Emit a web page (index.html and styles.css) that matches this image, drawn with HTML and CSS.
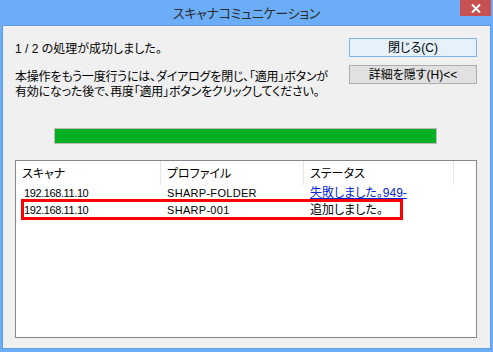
FILE: index.html
```html
<!DOCTYPE html>
<html lang="ja">
<head>
    <meta charset="UTF-8">
    <meta name="viewport" content="width=device-width, initial-scale=1.0">
    <title>スキャナコミュニケーション</title>
    <link rel="stylesheet" href="styles.css">
</head>
<body>

<div id="window">
    <div id="title-bar">
        <span id="title-text">スキャナコミュニケーション</span>
        <button id="close-x">
            <svg width="10" height="9" viewBox="0 0 10 9">
                <path d="M1 0.5 L9 8.5 M9 0.5 L1 8.5" stroke="#fff" stroke-width="2"/>
            </svg>
        </button>
    </div>

    <div id="client">
        <div id="top-area">
            <div id="message-area">
                <p class="msg-first">1 / 2 の処理が成功しました。</p>
                <p class="msg-second">本操作をもう一度行うには、ダイアログを閉じ、「適用」ボタンが<br>有効になった後で、再度「適用」ボタンをクリックしてください。</p>
            </div>
            <div id="button-area">
                <button class="dlg-button default-button">閉じる(C)</button>
                <button class="dlg-button">詳細を隠す(H)&lt;&lt;</button>
            </div>
        </div>

        <div id="progress">
            <div class="progress-fill"></div>
        </div>

        <div id="result-list">
            <div class="list-row list-header">
                <div class="cell col-scanner">スキャナ</div>
                <div class="cell col-profile">プロファイル</div>
                <div class="cell col-status">ステータス</div>
                <div class="cell col-rest"></div>
            </div>
            <div class="list-row">
                <div class="cell col-scanner latin">192.168.11.10</div>
                <div class="cell col-profile latin wide">SHARP-FOLDER</div>
                <div class="cell col-status"><a href="#" class="status-link">失敗しました。949-</a></div>
            </div>
            <div class="list-row">
                <div class="cell col-scanner latin">192.168.11.10</div>
                <div class="cell col-profile latin wide">SHARP-001</div>
                <div class="cell col-status">追加しました。</div>
            </div>
            <div id="highlight-box"></div>
        </div>
    </div>
</div>

</body>
</html>
```

FILE: styles.css
```css
body {
    margin: 0;
    padding: 0;
    background-color: #6badf6;
    font-family: 'Liberation Sans', 'Noto Sans CJK JP', sans-serif;
    font-size: 12px;
    font-feature-settings: "palt";
    color: #000;
}

#window {
    width: 493px;
    height: 352px;
    display: flex;
    flex-direction: column;
}

#title-bar {
    height: 26px;
    position: relative;
    display: flex;
    justify-content: center;
    align-items: center;
}

#title-text {
    font-family: 'Noto Sans CJK JP', sans-serif;
    font-size: 13px;
    color: #2b2b2b;
    margin-top: -2px;
    letter-spacing: -0.3px;
}

#close-x {
    position: absolute;
    top: 0;
    right: 2px;
    width: 31px;
    height: 16px;
    border: none;
    padding: 0;
    background-color: #c75050;
    display: flex;
    justify-content: center;
    align-items: center;
}

#client {
    flex: 1;
    margin: 0 3px 4px 3px;
    background-color: #f0f0f0;
    box-shadow: 0 0 0 1px #5f9ee6;
    display: flex;
    flex-direction: column;
}

#top-area {
    display: flex;
    justify-content: space-between;
    padding: 12px 13px 0 12px;
}

#message-area p {
    margin: 0;
}

.msg-first {
    padding-top: 4px;
    line-height: 14px;
}

.msg-second {
    margin-top: 14px !important;
    line-height: 15px;
    letter-spacing: -0.2px;
}

#button-area {
    display: flex;
    flex-direction: column;
    gap: 8px;
}

.dlg-button {
    width: 128px;
    height: 19px;
    padding: 0;
    font-family: inherit;
    font-size: 12px;
    font-feature-settings: "palt";
    border: 1px solid #adadad;
    background-color: #e1e1e1;
    color: #000;
    line-height: 16px;
}

.default-button {
    border-color: #7eb4ea;
    background-color: #e5f1fb;
}

#progress {
    margin: 28px 53px 0 51px;
    height: 14px;
    border: 1px solid #bcbcbc;
    background-color: #e6e6e6;
}

.progress-fill {
    width: 100%;
    height: 100%;
    background-color: #06b025;
}

#result-list {
    position: relative;
    margin: 16px 13px 0 12px;
    height: 176px;
    border: 1px solid #828790;
    background-color: #fff;
}

.list-row {
    display: flex;
    height: 17px;
    line-height: 17px;
}

.list-header {
    height: 24px;
    line-height: 24px;
}

.cell {
    box-sizing: border-box;
    white-space: nowrap;
    overflow: hidden;
}

.col-scanner {
    width: 145px;
    padding-left: 8px;
}

.col-profile {
    width: 143px;
    padding-left: 6px;
}

.col-status {
    width: 150px;
    padding-left: 6px;
}

.col-rest {
    flex: 1;
}

.list-header .cell {
    border-right: 1px solid #e5e5e5;
    padding-top: 1px;
}

.list-header .col-scanner {
    padding-left: 6px;
}

.list-header .col-rest {
    border-right: none;
}

.latin {
    font-size: 11px;
    letter-spacing: -0.4px;
}

.latin.wide {
    letter-spacing: 0.3px;
}

.status-link {
    color: #0026d9;
    text-decoration: underline;
}

/* annotation frame drawn over the second row */
#highlight-box {
    position: absolute;
    left: 5px;
    top: 38px;
    width: 376px;
    height: 15px;
    border: 3px solid #ff0000;
}
```
